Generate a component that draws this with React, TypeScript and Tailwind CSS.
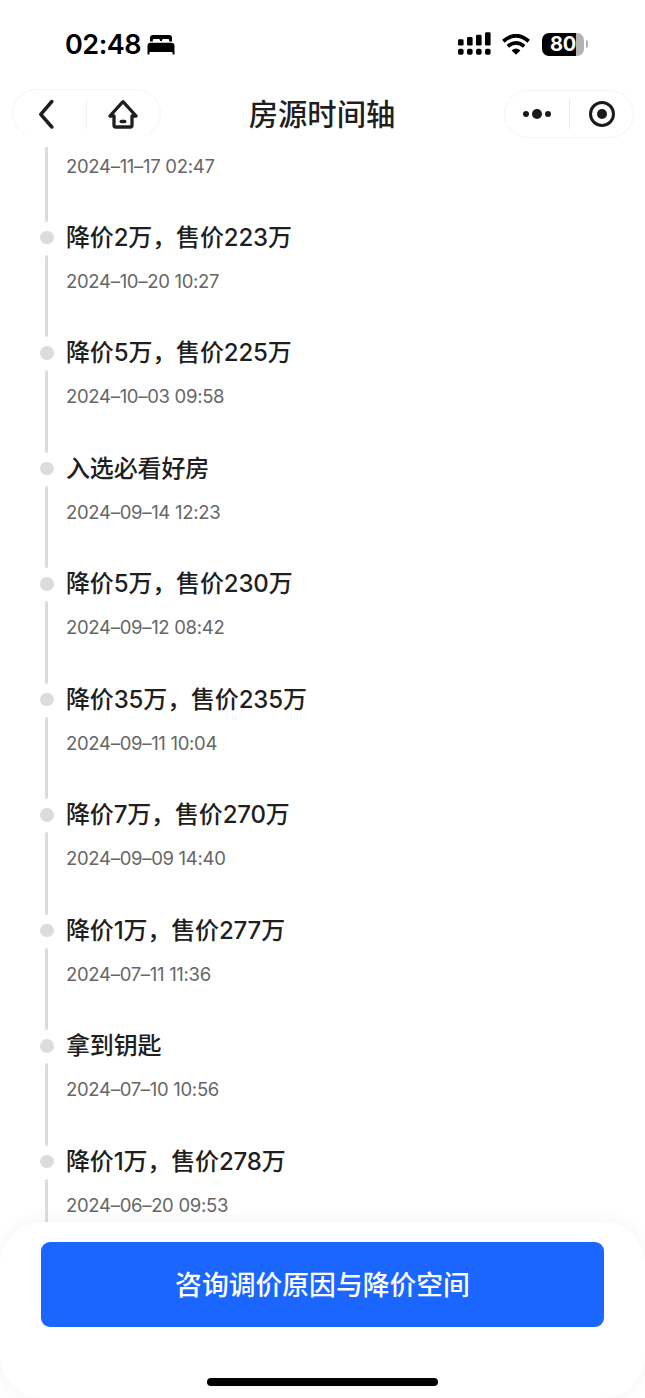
/** Listing timeline page — price change history of one property. */

interface TimelineEvent {
  title: string;
  time: string;
}

const EVENTS: TimelineEvent[] = [
  { title: '降价2万，售价223万', time: '2024–10–20 10:27' },
  { title: '降价5万，售价225万', time: '2024–10–03 09:58' },
  { title: '入选必看好房', time: '2024–09–14 12:23' },
  { title: '降价5万，售价230万', time: '2024–09–12 08:42' },
  { title: '降价35万，售价235万', time: '2024–09–11 10:04' },
  { title: '降价7万，售价270万', time: '2024–09–09 14:40' },
  { title: '降价1万，售价277万', time: '2024–07–11 11:36' },
  { title: '拿到钥匙', time: '2024–07–10 10:56' },
  { title: '降价1万，售价278万', time: '2024–06–20 09:53' },
];

function StatusBar() {
  return (
    <div className="flex h-[89px] shrink-0 items-center pl-[65px] pr-[57px] text-black">
      <span className="w-[82px] text-[27px] font-semibold leading-none tracking-[-0.5px]">02:48</span>
      <svg width="28" height="20" viewBox="0 0 28 20" fill="currentColor">
        <path d="M3 6.5V3Q3 0 6 0H22Q25 0 25 3V6.5H22.2V5.2Q22.2 4 21 4H16.2Q15 4 15 5.2V6H13V5.2Q13 4 11.8 4H7Q5.8 4 5.8 5.2V6.5Z" />
        <path d="M.5 19V11Q.5 7.7 3.8 7.7H24.2Q27.5 7.7 27.5 11V19Q27.5 19.5 26.5 19.5T25.5 19V17H2.5V19Q2.5 19.5 1.5 19.5T.5 19Z" />
      </svg>
      <div className="ml-auto flex items-center pb-[1px]">
        <svg width="34" height="24" viewBox="0 0 34 24" fill="currentColor" className="mr-[10px]">
          <rect x="0" y="7.3" width="5.6" height="6.3" rx="1.4" />
          <rect x="9" y="5" width="5.6" height="8.6" rx="1.4" />
          <rect x="18" y="2.7" width="5.6" height="10.9" rx="1.4" />
          <rect x="27" y=".2" width="5.6" height="13.4" rx="1.4" />
          <rect x="0" y="16.8" width="5.6" height="6" rx="1.8" />
          <rect x="9" y="16.8" width="5.6" height="6" rx="1.8" />
          <rect x="18" y="16.8" width="5.6" height="6" rx="1.8" />
          <rect x="27" y="16.8" width="5.6" height="6" rx="1.8" />
        </svg>
        <svg width="28" height="21" viewBox="0 0 28 21" className="mr-[12px]">
          <path d="M1.3 7.3Q14-3.8 26.7 7.3" fill="none" stroke="currentColor" strokeWidth="3.8" />
          <path d="M5.8 12.3Q14 5.3 22.2 12.3" fill="none" stroke="currentColor" strokeWidth="3.6" />
          <path d="M9.6 16.4Q14 12.8 18.4 16.4L14 20.7Z" fill="currentColor" />
        </svg>
        <div className="flex h-[23px] w-[42px] items-center justify-center rounded-[7px] bg-[linear-gradient(to_right,#000_80%,#b3b3b3_80%)]">
          <span className="text-[20px] font-bold leading-none tracking-[-0.3px] text-white">80</span>
        </div>
        <div className="ml-[1.5px] h-[8px] w-[2.5px] rounded-r-full bg-[#b3b3b3]" />
      </div>
    </div>
  );
}

function NavBar() {
  return (
    <div className="flex h-[58px] shrink-0 items-start pl-[12px] pr-[11px]">
      {/* The lower edge of this capsule is cut off */}
      <div className="h-[46px] w-[149px] overflow-hidden">
        <div className="flex h-[49px] items-center rounded-full border border-[#f4f4f4]">
          <div className="flex w-[73px] justify-center pr-[8px]">
            <svg width="16" height="30" viewBox="0 0 16 30" fill="none" stroke="#1f1f1f" strokeWidth="3.5" strokeLinecap="round" strokeLinejoin="round">
              <path d="M13.8 2.5L2.8 15.3L13.8 28" />
            </svg>
          </div>
          <div className="h-[30px] w-px bg-[#f1f1f1]" />
          <div className="flex flex-1 justify-center pr-[1px]">
            <svg width="32" height="30" viewBox="0 0 32 30" fill="none" stroke="#1f1f1f" strokeWidth="3.3" strokeLinecap="round" strokeLinejoin="round">
              <path d="M16 2.7L2.9 17H7V26.3Q7 28 8.8 28H23.2Q25 28 25 26.3V17H29.1Z" />
              <path d="M14.2 22.5H17.8" />
            </svg>
          </div>
        </div>
      </div>
      <h1 className="h-[50px] flex-1 text-center text-[29.3px] font-medium leading-[52px] text-[#1f1f1f]">
        <span className="mr-[21px]">房源时间轴</span>
      </h1>
      <div className="mt-[1px] flex h-[48px] w-[130px] items-center rounded-full border border-[#f4f4f4]">
        <div className="flex w-[64px] items-center justify-center gap-[3px]">
          <i className="size-[6px] rounded-full bg-[#1a1a1a]" />
          <i className="size-[10px] rounded-full bg-[#1a1a1a]" />
          <i className="size-[6px] rounded-full bg-[#1a1a1a]" />
        </div>
        <div className="h-[30px] w-px bg-[#e8e8e8]" />
        <div className="flex flex-1 justify-center pl-[1px]">
          <div className="flex size-[26px] items-center justify-center rounded-full border-[3px] border-[#1a1a1a]">
            <div className="size-[10px] rounded-full bg-[#1a1a1a]" />
          </div>
        </div>
      </div>
    </div>
  );
}

function EventTime({ time }: { time: string }) {
  return (
    <div className="text-[18.5px] font-normal leading-[24px] tracking-[-0.3px] text-[#666]">{time}</div>
  );
}

function TimelineRow({ event }: { event: TimelineEvent }) {
  return (
    <li className="flex h-[115.5px] shrink-0 gap-[12px]">
      <div className="flex w-[14px] flex-col items-center">
        <div className="flex h-[33px] shrink-0 items-center pb-[1px]">
          <div className="size-[13.5px] shrink-0 rounded-full bg-[#dcdcdc]" />
        </div>
        <div className="mr-[1px] w-[3px] flex-1 rounded-full bg-[#dcdcdc]" />
      </div>
      <div>
        <div className="mb-[14px] h-[33px] text-[24px] font-medium leading-[32px] tracking-[-0.15px] text-[#1f1f1f]">{event.title}</div>
        <EventTime time={event.time} />
      </div>
    </li>
  );
}

export default function App() {
  return (
    <div className="flex h-[1398px] w-[645px] flex-col overflow-hidden bg-white font-['Inter','Noto_Sans_CJK_SC',sans-serif]">
      <StatusBar />
      <NavBar />

      <ul className="flex min-h-0 flex-1 flex-col overflow-hidden pl-[40px]">
        <li className="flex h-[74.5px] shrink-0 gap-[12px]">
          <div className="flex w-[14px] justify-center">
            <div className="mr-[1px] w-[3px] rounded-b-full bg-[#dcdcdc]" />
          </div>
          <div className="pt-[7px]">
            <EventTime time="2024–11–17 02:47" />
          </div>
        </li>
        {EVENTS.map((event) => (
          <TimelineRow key={event.time} event={event} />
        ))}
      </ul>

      <div className="relative flex h-[176px] shrink-0 flex-col items-center rounded-[42px] bg-white pt-[20px] shadow-[0_0_18px_rgba(0,0,0,0.05)]">
        <button className="h-[85px] w-[563px] rounded-[9px] bg-[#1b66ff] pt-[2px] text-[26.8px] font-medium leading-none text-white">
          咨询调价原因与降价空间
        </button>
        <div className="mt-[51px] h-[8px] w-[231px] rounded-full bg-black" />
      </div>
    </div>
  );
}
